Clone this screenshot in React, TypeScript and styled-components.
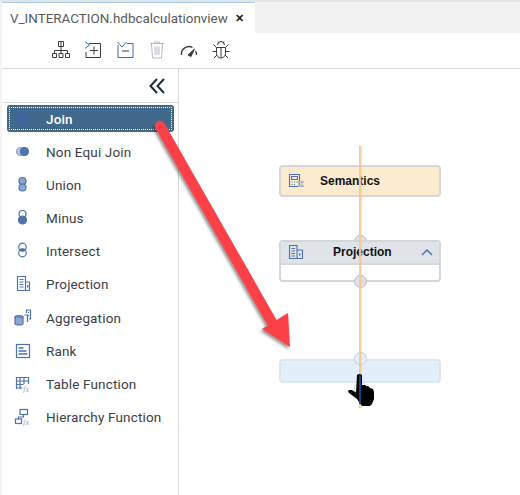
import React from "react";
import styled, { createGlobalStyle } from "styled-components";

const Global = createGlobalStyle`
  html, body { margin: 0; padding: 0; background: #fff; }
  body { width: 520px; height: 495px; overflow: hidden; font-family: "Roboto", "Liberation Sans", sans-serif; }
`;

const Page = styled.div`
  position: relative;
  width: 520px;
  height: 495px;
  display: flex;
  flex-direction: column;
  background: #f4f4f6;
  overflow: hidden;
`;

const TabBar = styled.div`
  height: 33px;
  display: flex;
  align-items: stretch;
  background: #f2f2f2;
  border-top: 2px solid #e4e4e4;
  box-sizing: border-box;
  padding-left: 2px;
`;

const Tab = styled.div`
  width: 253px;
  display: flex;
  align-items: center;
  justify-content: space-between;
  background: #fff;
  border-top: 1px solid #a3cbee;
  padding: 0 11px 0 8px;
  box-sizing: border-box;
  font-family: "Roboto", sans-serif;
  font-size: 13.45px;
  color: #5a5a5a;
`;

const CloseMark = styled.span`
  color: #222;
  font-size: 11px;
  font-weight: 700;
`;

const Toolbar = styled.div`
  height: 36px;
  box-sizing: border-box;
  background: #fff;
  border-bottom: 1px solid #d9d9d9;
  display: flex;
  align-items: center;
  padding: 0 0 2px 48px;
  gap: 10px;
  margin-left: 2px;
`;

const ToolIcon = styled.svg<{ $muted?: boolean }>`
  width: 22px;
  height: 20px;
  fill: none;
  stroke: ${(p) => (p.$muted ? "#b4bcc4" : "#3c3c3c")};
  stroke-width: 1;
`;

const Body = styled.div`
  flex: 1;
  display: flex;
  min-height: 0;
  margin-left: 2px;
  background: #fff;
`;

const Sidebar = styled.aside`
  box-sizing: border-box;
  width: 177px;
  border-right: 1px solid #d5d8dc;
  display: flex;
  flex-direction: column;
`;

const SideHead = styled.div`
  height: 34px;
  box-sizing: border-box;
  border-bottom: 1px solid #d9d9d9;
  display: flex;
  align-items: center;
  justify-content: flex-end;
  padding: 0 12px 0 0;
`;

const List = styled.ul`
  list-style: none;
  margin: 0;
  padding: 2px 0 0 5px;
  display: flex;
  flex-direction: column;
`;

const Item = styled.li<{ $active?: boolean }>`
  width: 167px;
  height: 27px;
  margin-bottom: 6.2px;
  display: flex;
  align-items: center;
  box-sizing: border-box;
  padding-left: 7px;
  border-radius: 3px;
  font-size: 13.5px;
  letter-spacing: 0.16px;
  color: ${(p) => (p.$active ? "#fff" : "#3b4046")};
  background: ${(p) => (p.$active ? "#40698c" : "transparent")};
  font-weight: ${(p) => (p.$active ? 500 : 400)};
  outline: ${(p) => (p.$active ? "1px dotted #fff" : "none")};
  outline-offset: -3px;
`;

const IconSlot = styled.svg`
  width: 18px;
  height: 18px;
  flex: none;
  margin-right: 14px;
  fill: none;
  stroke: #4f72ac;
  stroke-width: 1.2;
`;

const Canvas = styled.main`
  position: relative;
  flex: 1;
`;

const Node = styled.div<{ $x: number; $y: number; $h: number; $bg: string; $border: string }>`
  position: absolute;
  left: ${(p) => p.$x}px;
  top: ${(p) => p.$y}px;
  width: 162px;
  height: ${(p) => p.$h}px;
  box-sizing: border-box;
  background: ${(p) => p.$bg};
  border: 2px solid ${(p) => p.$border};
  border-radius: 4px;
`;

const NodeHead = styled.div<{ $bg: string }>`
  height: 100%;
  display: flex;
  align-items: center;
  position: relative;
  background: ${(p) => p.$bg};
  font-family: "Liberation Sans", sans-serif;
  font-weight: 700;
  font-size: 12px;
  color: #111;
  border-radius: 2px 2px 0 0;
`;

const ProjectionHead = styled(NodeHead)`
  height: 20px;
  padding-bottom: 1px;
  border-bottom: 2px solid #d6d9dc;
  box-sizing: content-box;
`;

const NodeIcon = styled.svg`
  width: 16px;
  height: 16px;
  margin-left: 7px;
  fill: none;
  stroke: #4f72ac;
  stroke-width: 1.1;
  flex: none;
`;

const NodeTitle = styled.span<{ $ml: number }>`
  margin-left: ${(p) => p.$ml}px;
`;

const Chevron = styled.svg`
  position: absolute;
  right: 6px;
  top: 6px;
  width: 12px;
  height: 8px;
  fill: none;
  stroke: #4f72ac;
  stroke-width: 1.5;
`;

const Port = styled.div<{ $x: number; $y: number; $bg: string; $faint?: boolean }>`
  position: absolute;
  left: ${(p) => p.$x}px;
  top: ${(p) => p.$y}px;
  width: 13px;
  height: 13px;
  box-sizing: border-box;
  border-radius: 50%;
  background: ${(p) => p.$bg};
  border: 1px solid ${(p) => (p.$faint ? "#c9d0d6" : "#b9bdc1")};
`;

const Overlay = styled.svg`
  position: absolute;
  left: 0;
  top: 0;
  width: 520px;
  height: 495px;
  pointer-events: none;
`;

const items = ["Join", "Non Equi Join", "Union", "Minus", "Intersect", "Projection", "Aggregation", "Rank", "Table Function", "Hierarchy Function"];

const Glyph: React.FC<{ i: number }> = ({ i }) => {
  const B = "#4f72ac";
  const L = "#8ea5cc";
  switch (i) {
    case 0:
      return (<><circle cx="5.5" cy="9" r="4.5" stroke="#3464ba" /><circle cx="10.5" cy="9" r="4.5" stroke="#3464ba" /></>);
    case 1:
      return (<><circle cx="6.5" cy="8.5" r="4" fill="#b5c4de" stroke={L} /><circle cx="10.5" cy="8.5" r="4" fill={B} stroke={B} /></>);
    case 2:
      return (<><circle cx="8.5" cy="5" r="3.5" fill={L} stroke={B} /><circle cx="8.5" cy="11.5" r="3.5" fill={L} stroke={B} /></>);
    case 3:
      return (<><circle cx="8.5" cy="5" r="3.5" /><circle cx="8.5" cy="11" r="4" fill={B} stroke={B} /></>);
    case 4:
      return (<><circle cx="8.5" cy="5" r="3.8" /><circle cx="8.5" cy="11" r="3.8" /><ellipse cx="8.5" cy="8" rx="3.2" ry="1.7" fill={B} stroke="none" /></>);
    case 5:
      return (<><path d="M3.5 1.5h8v14h-8zM11.5 7h4v8.5h-4M5.5 4.5h4M5.5 7h4M5.5 9.5h4M5.5 12h4" /><rect x="13" y="10" width="1.4" height="2.4" stroke="none" fill={B} /></>);
    case 6:
      return (<><ellipse cx="5" cy="8" rx="4" ry="1.5" fill={L} stroke={B} /><path d="M1 8v6.5c0 2 8 2 8 0V8z" fill={L} stroke={B} /><path d="M10.5 6h3v7M12.5 4V1h4v9H15M14 3.5h1M14 6.5h1" /></>);
    case 7:
      return (<><rect x="2.5" y="2.5" width="13" height="13" /><path d="M4.5 6h5M4.5 9h8M4.5 12h9" stroke={B} strokeWidth="1.3" /></>);
    case 8:
      return (<><path d="M2.5 14V2.5h12V9M2.5 6h12M2.5 9.5h7M2.5 13h6M6 2.5V14M10 2.5V9" /><text x="9" y="17" fontSize="8" fontStyle="italic" fill={L} stroke="none" fontFamily="Liberation Serif">fx</text></>);
    default:
      return (<><rect x="6" y="1.5" width="7.5" height="5" /><rect x="1.5" y="11" width="6" height="4.5" /><path d="M9.5 6.5v2.5H4.5V11" /><text x="9" y="16.5" fontSize="8" fontStyle="italic" fill={L} stroke="none" fontFamily="Liberation Serif">fx</text></>);
  }
};

const Arrow = () => (
  <>
    <defs>
      <filter id="sh" x="-20%" y="-20%" width="140%" height="140%">
        <feDropShadow dx="-1.5" dy="2" stdDeviation="1.8" floodColor="#000" floodOpacity="0.45" />
      </filter>
    </defs>
    <g filter="url(#sh)">
      <path d="M160 126 L274 326" stroke="#fb4147" strokeWidth="10.5" strokeLinecap="round" fill="none" />
      <path d="M262 329 L288 313 L290 347 Z" fill="#fb4147" />
    </g>
  </>
);

const Hand = () => (
  <g>
    <path d="M357 375 q2.500-2 5 0 V385 h3 l1 1 3 .5 1 1.500 3 1 1 3 v7 l-2 5 -2 2 h-8 l-3-4 -2-3 -4-3 -4-3 -1-2 1-1 h3 l4 2.500z" fill="#000" />
    <rect x="359" y="375" width="2" height="29" fill="#12457f" />
  </g>
);

export default function App() {
  return (
    <Page>
      <Global />
      <TabBar>
        <Tab>
          <span>V_INTERACTION.hdbcalculationview</span>
          <CloseMark>✕</CloseMark>
        </Tab>
      </TabBar>
      <Toolbar>
        <ToolIcon viewBox="0 0 22 20">
          <path d="M8.500 1.500h5v5h-5zM11 1v13M4.500 13.500v-3h13v3M2.500 13.500h4v4h-4zM9 13.500h4v4H9zM15.500 13.500h4v4h-4z" />
        </ToolIcon>
        <ToolIcon viewBox="0 0 22 20">
          <path d="M3 1.500l4.500 3.500L3 8.500" stroke="#3f6aa8" />
          <path d="M7 3.500h11.500v14H4V12M12 6.500v8M8 10.500h8" />
        </ToolIcon>
        <ToolIcon viewBox="0 0 22 20">
          <path d="M3.500 2l4.500 5 4.500-5M13 3.500h6v14H4V5" stroke="#3f6aa8" />
          <path d="M8 11h7" />
        </ToolIcon>
        <ToolIcon $muted viewBox="0 0 22 20">
          <path d="M4 3.500h14M8.500 3.500V2h5v1.500M5.500 3.500l1 14.500h9l1-14.500M9 6.500v8.500M11 6.500v8.500M13 6.500v8.500" />
        </ToolIcon>
        <ToolIcon viewBox="0 0 22 20">
          <path d="M3.500 15a7.500 7.500 0 0 1 11-7.500M17.500 11a7.500 7.500 0 0 1 1 4" strokeWidth="1.3" />
          <path d="M10 15l6.500-6-3.500 7.500z" fill="#3c3c3c" />
        </ToolIcon>
        <ToolIcon viewBox="0 0 22 20">
          <path d="M7.500 5a3.500 3.500 0 0 1 7 0M6.500 7.500h9v6a4.500 4.500 0 0 1-9 0zM11 7.500V18M6.500 7.500L3.500 4.500M15.500 7.500l3-3M6.500 11.500H2.500M15.500 11.500h4M7 15l-3 3M15 15l3 3M8 1.500l1 2M14 1.500l-1 2" />
        </ToolIcon>
      </Toolbar>
      <Body>
        <Sidebar>
          <SideHead>
            <svg width="17" height="16" viewBox="0 0 17 16" fill="none" strokeWidth="2">
              <path d="M8 1L1.500 8 8 15M15 1L8.500 8 15 15" stroke="#1d2d3e" />
            </svg>
          </SideHead>
          <List>
            {items.map((t, i) => (
              <Item key={t} $active={i === 0}>
                <IconSlot viewBox="0 0 18 18"><Glyph i={i} /></IconSlot>
                <span>{t}</span>
              </Item>
            ))}
          </List>
        </Sidebar>
        <Canvas />
      </Body>
      <Node $x={279} $y={165} $h={32} $bg="#fdebd0" $border="#d4d6d8">
        <NodeHead $bg="transparent">
          <NodeIcon viewBox="0 0 16 16">
            <path d="M1.500 1.500h10v12h-10zM3.500 3.500h6v3h-6zM3.500 9h1M6 9h1M8.500 9h1M3.500 11.500h1M6 11.500h1" />
            <rect x="10" y="8" width="2.500" height="2.500" fill="#9db2d3" stroke="none" />
            <rect x="13" y="8" width="2.500" height="2.500" fill="#9db2d3" stroke="none" />
            <rect x="10" y="11.500" width="2.500" height="2.500" fill="#9db2d3" stroke="none" />
            <rect x="13" y="11.500" width="2.500" height="2.500" fill="#9db2d3" stroke="none" />
          </NodeIcon>
          <NodeTitle $ml={16}>Semantics</NodeTitle>
        </NodeHead>
      </Node>
      <Port $x={354} $y={235} $bg="#dfe3e7" />
      <Node $x={279} $y={240} $h={42} $bg="#fff" $border="#d4d6d8">
        <ProjectionHead $bg="#e0e4e9">
          <NodeIcon viewBox="0 0 16 16">
            <path d="M1.500 1.500h7.500v13H1.500zM9 6h5.500v8.500H9M3.500 4.500h3.500M3.500 7h3.500M3.500 9.500h3.500M3.500 12h3.500" />
            <rect x="11" y="9.500" width="1.500" height="2" fill="#4f72ac" stroke="none" />
          </NodeIcon>
          <NodeTitle $ml={29}>Projection</NodeTitle>
          <Chevron viewBox="0 0 12 8"><path d="M1 7l5-5 5 5" /></Chevron>
        </ProjectionHead>
      </Node>
      <Port $x={354} $y={275} $bg="#dfe3e7" />
      <Node $x={279} $y={359} $h={24} $bg="#e2effa" $border="#dde6ef" />
      <Port $x={354} $y={352} $bg="#e8f0f7" $faint />
      <Port $x={354} $y={382} $bg="#fff" $faint />
      <Overlay viewBox="0 0 520 495">
        <rect x="359" y="146" width="2.500" height="262" fill="#f7c78f" opacity="0.9" />
        <Arrow />
        <Hand />
      </Overlay>
    </Page>
  );
}
